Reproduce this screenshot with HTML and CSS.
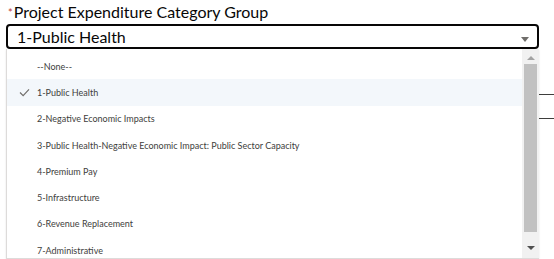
FILE: index.html
```html
<!DOCTYPE html>
<html lang="en">
<head>
<meta charset="UTF-8" />
<title>Project Expenditure Category Group</title>
<link rel="stylesheet" href="styles.css">
</head>
<body>

<div class="behind">
  <span class="rule"></span>
  <span class="rule second"></span>
</div>

<div class="field">
  <label class="field-label"><abbr class="required">*</abbr>Project Expenditure Category Group</label>
  <div class="combo">
    <span class="combo-value">1-Public Health</span>
    <span class="combo-caret"></span>
  </div>

  <div class="listbox">
    <ul class="options">
      <li class="option">--None--</li>
      <li class="option selected">
        <svg class="check" viewBox="0 0 12 10" width="11" height="9"><path d="M1 5 L4.5 8.5 L11 1.5" fill="none" stroke="#706e6b" stroke-width="1.3"/></svg>
        1-Public Health
      </li>
      <li class="option">2-Negative Economic Impacts</li>
      <li class="option">3-Public Health-Negative Economic Impact: Public Sector Capacity</li>
      <li class="option">4-Premium Pay</li>
      <li class="option">5-Infrastructure</li>
      <li class="option">6-Revenue Replacement</li>
      <li class="option">7-Administrative</li>
    </ul>
    <div class="scrollbar">
      <span class="arrow up"></span>
      <span class="thumb"></span>
      <span class="arrow down"></span>
    </div>
  </div>
</div>

</body>
</html>
```

FILE: styles.css
```css
* {
  margin: 0; padding: 0; box-sizing: border-box;
}
body {
  font-family: Lato, "Liberation Sans", sans-serif;
  background: #fff;
  color: #080707;
  position: relative;
  width: 554px;
  height: 259px;
  overflow: hidden;
}
/* Lines of the page behind the open list */
.behind .rule {
  position: absolute;
  left: 539px;
  top: 94px;
  width: 15px;
  height: 1px;
  background: #3e3e3c;
}
.behind .rule.second {
  top: 118px;
}
.field {
  padding: 2px 15px 0 6px;
  position: relative;
}
.field-label {
  display: block;
  font-size: 16px;
  line-height: 20px;
  height: 22px;
}
.required {
  color: #c23934;
  text-decoration: none;
  font-size: 11px;
  margin: 0 1px 0 2px;
  vertical-align: 1px;
}
.combo {
  display: flex;
  align-items: center;
  height: 25px;
  border: 2px solid #080707;
  border-radius: 4px;
  padding: 0 8px 0 9px;
}
.combo-value {
  flex: 1;
  font-size: 16px;
  line-height: 20px;
}
.combo-caret {
  width: 0;
  height: 0;
  margin-top: 6px;
  border-left: 4px solid transparent;
  border-right: 4px solid transparent;
  border-top: 5px solid #706e6b;
}
/* Open list */
.listbox {
  position: absolute;
  left: 6px;
  top: 49px;
  width: 533px;
  height: 210px;
  display: flex;
  background: #fff;
  border: 1px solid #dddbda;
  border-top: none;
  border-right: none;
  box-shadow: 0 1px 2px rgba(0,0,0,0.1);
}
.options {
  list-style: none;
  flex: 1;
  padding-top: 4px;
}
.option {
  display: flex;
  align-items: center;
  height: 26.3px;
  padding-left: 30px;
  font-size: 9px;
  color: #3e3e3c;
  position: relative;
}
.option.selected {
  background: #f3f7fb;
}
.check {
  position: absolute;
  left: 12px;
  top: 9px;
}
.scrollbar {
  width: 17px;
  background: #f1f1f1;
  display: flex;
  flex-direction: column;
  align-items: center;
}
.arrow {
  width: 0;
  height: 0;
  border-left: 4px solid transparent;
  border-right: 4px solid transparent;
}
.arrow.up {
  margin: 7px 0 4px;
  border-bottom: 4px solid #a3a3a3;
}
.arrow.down {
  margin: 14px 0 8px;
  border-top: 4px solid #505050;
}
.thumb {
  width: 13px;
  flex: 1;
  background: #c1c1c1;
}
```
